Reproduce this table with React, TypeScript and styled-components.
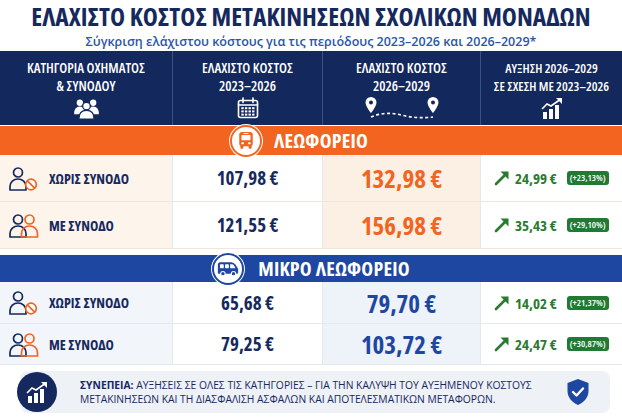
import React from 'react'
import styled, { createGlobalStyle } from 'styled-components'

const GlobalStyle = createGlobalStyle`
  body { margin: 0; background: #ffffff; }
  * { box-sizing: border-box; }
`

const NAVY = '#15295e'
const ORANGE = '#f2641f'
const BLUE = '#1e47a1'
const GREEN = '#2a7b30'
const COLS = '172px 150px 158px 142px'

type Tone = 'orange' | 'blue'

const palette = {
  orange: { bar: ORANGE, label: '#fdf4eb', mid: '#fcf0e4', line: '#eee6dd', value: ORANGE },
  blue: { bar: BLUE, label: '#f2f5fa', mid: '#eef2f9', line: '#e4e9f1', value: BLUE },
}

const Page = styled.div`
  width: 622px;
  height: 420px;
  overflow: hidden;
  background: #ffffff;
  font-family: "Open Sans", "Noto Sans", sans-serif;
  font-stretch: condensed;
`
const Heading = styled.header`
  height: 51px;
  display: flex;
  flex-direction: column;
  align-items: center;
  padding-top: 1px;
`
const Title = styled.h1`
  margin: 0;
  font-size: 25.5px;
  line-height: 30px;
  font-weight: 700;
  color: ${NAVY};
  white-space: nowrap;
`
const Subtitle = styled.div`
  margin-top: 3px;
  font-stretch: normal;
  font-size: 12.5px;
  line-height: 16px;
  font-weight: 600;
  color: #2a55a8;
  white-space: nowrap;
`
const HeaderRow = styled.div`
  display: grid;
  grid-template-columns: ${COLS};
  height: 74px;
  background: #13285c;
`
const HeadCell = styled.div<{ $small?: boolean }>`
  display: flex;
  flex-direction: column;
  align-items: center;
  padding-top: 8px;
  color: #ffffff;
  font-size: ${p => (p.$small ? 13 : 14)}px;
  line-height: 18px;
  font-weight: 600;
  text-align: center;
  white-space: nowrap;
  & + & {
    border-left: 1px solid #3c5087;
  }
`
const HeadIcon = styled.div`
  height: 24px;
  margin-top: 1px;
  display: flex;
  align-items: center;
`
const SectionBar = styled.div<{ $tone: Tone }>`
  height: ${p => (p.$tone === 'orange' ? 29 : 27)}px;
  margin-top: ${p => (p.$tone === 'orange' ? 1 : 6)}px;
  background: ${p => palette[p.$tone].bar};
  display: flex;
  justify-content: center;
  align-items: center;
  gap: ${p => (p.$tone === 'orange' ? 12 : 14)}px;
  padding-right: ${p => (p.$tone === 'orange' ? 24 : 0)}px;
`
const Badge = styled.div<{ $tone: Tone }>`
  position: relative;
  z-index: 1;
  width: 32px;
  height: 32px;
  flex-shrink: 0;
  border-radius: 50%;
  background: #ffffff;
  border: 2px solid ${p => palette[p.$tone].bar};
  box-shadow: 0 0 0 1px #ffffff;
  display: flex;
  align-items: center;
  justify-content: center;
`
const SectionTitle = styled.span`
  color: #ffffff;
  font-size: 20px;
  font-weight: 700;
  letter-spacing: 0.2px;
`
const DataRow = styled.div<{ $h: number; $tone: Tone }>`
  display: grid;
  grid-template-columns: ${COLS};
  height: ${p => p.$h}px;
  border-bottom: 1px solid ${p => palette[p.$tone].line};
`
const Cell = styled.div<{ $bg: string; $line: string }>`
  background: ${p => p.$bg};
  display: flex;
  align-items: center;
  justify-content: center;
  & + & {
    border-left: 1px solid ${p => p.$line};
  }
`
const LabelCell = styled(Cell)`
  justify-content: flex-start;
  padding-left: 8px;
  gap: 10px;
`
const Label = styled.span`
  font-size: 14px;
  font-weight: 700;
  color: ${NAVY};
`
const Amount = styled.span<{ $size: number; $color: string }>`
  font-size: ${p => p.$size}px;
  font-weight: 700;
  color: ${p => p.$color};
`
const ChangeCell = styled(Cell)`
  justify-content: flex-start;
  padding-left: 13px;
  gap: 5px;
`
const ChangeValue = styled.span`
  font-size: 15px;
  font-weight: 700;
  color: ${GREEN};
  margin-right: 5px;
`
const Pct = styled.span`
  background: #1f7a34;
  color: #ffffff;
  font-size: 9.5px;
  font-weight: 600;
  line-height: 14px;
  padding: 0 3px;
  border-radius: 3px;
`
const Footer = styled.div`
  margin: 6px 12px 0 20px;
  height: 42px;
  border-radius: 8px;
  background: #eef1f6;
  display: flex;
  align-items: center;
  padding-right: 20px;
`
const FooterBadge = styled.div`
  width: 40px;
  height: 40px;
  flex-shrink: 0;
  margin-left: -3px;
  border-radius: 50%;
  background: ${NAVY};
  display: flex;
  align-items: center;
  justify-content: center;
`
const FooterText = styled.p`
  flex: 1;
  margin: 0 0 0 23px;
  font-size: 10.3px;
  font-stretch: 90%;
  line-height: 14px;
  font-weight: 500;
  color: ${NAVY};
  white-space: nowrap;
  b {
    font-weight: 700;
  }
`

const Group = () => (
  <svg width="25" height="21" viewBox="0 0 26 22" fill="#fff">
    <circle cx="6" cy="5" r="3.3" />
    <circle cx="20" cy="5" r="3.3" />
    <path d="M0 17 q0-8 6-8 q3 0 4.5 2 L10 17z" />
    <path d="M26 17 q0-8 -6-8 q-3 0 -4.5 2 L16 17z" />
    <circle cx="13" cy="8.5" r="4" stroke="#13285c" strokeWidth="1.3" />
    <path d="M5 22 q0-9 8-9 q8 0 8 9z" stroke="#13285c" strokeWidth="1.3" />
  </svg>
)

const Calendar = () => (
  <svg width="22" height="22" viewBox="0 0 22 22">
    <g fill="none" stroke="#fff" strokeWidth="1.6" strokeLinecap="round">
      <rect x="1.5" y="3.5" width="19" height="17" rx="2" />
      <line x1="1.5" y1="8" x2="20.5" y2="8" />
      <line x1="6" y1="1" x2="6" y2="5.5" />
      <line x1="16" y1="1" x2="16" y2="5.5" />
    </g>
    <g fill="#fff">
      {[0, 1, 2].map(r =>
        [0, 1, 2, 3].map(c => <rect key={`${r}${c}`} x={4.3 + c * 3.6} y={10.2 + r * 3.2} width="2.4" height="2" />)
      )}
    </g>
  </svg>
)

const Pin = ({ x }: { x: number }) => (
  <g transform={`translate(${x} 0)`}>
    <path d="M0 1 a5.5 5.5 0 0 1 5.5 5.5 c0 4 -5.5 10.5 -5.5 10.5 s-5.5 -6.5 -5.5 -10.5 A5.5 5.5 0 0 1 0 1z" fill="#fff" />
    <circle cx="0" cy="6.5" r="2" fill="#13285c" />
  </g>
)

const Route = () => (
  <svg width="74" height="24" viewBox="0 0 74 24">
    <path d="M6 21 Q20 15 36 19 T68 21" fill="none" stroke="#fff" strokeWidth="1.6" strokeDasharray="3 2.5" />
    <Pin x={6} />
    <Pin x={68} />
  </svg>
)

const Chart = ({ size }: { size: number }) => (
  <svg width={size} height={size} viewBox="0 0 22 22">
    <g fill="#fff">
      <rect x="2" y="15" width="4" height="7" />
      <rect x="8" y="12" width="4" height="10" />
      <rect x="14" y="8" width="4" height="14" />
      <path d="M15 1 H21 V7z" />
    </g>
    <polyline points="1,12 6,7 10,9 18.5,3" fill="none" stroke="#fff" strokeWidth="1.6" />
  </svg>
)

const BusFront = () => (
  <svg width="18" height="19" viewBox="0 0 24 25">
    <rect x="3" y="1" width="18" height="19" rx="3.5" fill={ORANGE} />
    <rect x="6" y="5" width="12" height="7" rx="1" fill="#fff" />
    <rect x="8.5" y="2.4" width="7" height="1.3" rx="0.6" fill="#fff" />
    <circle cx="7.5" cy="16" r="1.6" fill="#fff" />
    <circle cx="16.5" cy="16" r="1.6" fill="#fff" />
    <rect x="4.5" y="19" width="4" height="4.5" rx="1.2" fill={ORANGE} />
    <rect x="15.5" y="19" width="4" height="4.5" rx="1.2" fill={ORANGE} />
  </svg>
)

const Van = () => (
  <svg width="22" height="16" viewBox="0 0 26 18">
    <path d="M1 4 Q1 1 4 1 H17 Q20 1 22 4 L25 9 V13 Q25 14.5 23.5 14.5 H2.5 Q1 14.5 1 13z" fill={BLUE} />
    <g fill="#fff">
      <rect x="3.5" y="3.5" width="4.5" height="4.5" rx="0.8" />
      <rect x="9.5" y="3.5" width="4.5" height="4.5" rx="0.8" />
      <path d="M15.5 3.5 H18 Q19.5 3.5 20.5 5.5 L21.8 8 H15.5z" />
    </g>
    <circle cx="7" cy="14.5" r="2.6" fill={BLUE} stroke="#fff" strokeWidth="1.2" />
    <circle cx="19.5" cy="14.5" r="2.6" fill={BLUE} stroke="#fff" strokeWidth="1.2" />
  </svg>
)

const Person = ({ x, color }: { x: number; color: string }) => (
  <g fill="none" stroke={color} strokeWidth="1.7" strokeLinejoin="round">
    <circle cx={x} cy="6.5" r="4.5" />
    <path d={`M${x - 8} 24 v-3.5 a8 7.5 0 0 1 16 0 v3.5z`} />
  </g>
)

const NoEscort = () => (
  <svg width="31" height="25" viewBox="0 0 31 25">
    <Person x={10} color={NAVY} />
    <circle cx="23" cy="18.5" r="5.3" fill="#fff" stroke={ORANGE} strokeWidth="1.7" />
    <line x1="19.3" y1="14.8" x2="26.7" y2="22.2" stroke={ORANGE} strokeWidth="1.7" />
  </svg>
)

const WithEscort = () => (
  <svg width="31" height="25" viewBox="0 0 31 25">
    <Person x={10} color={NAVY} />
    <Person x={21.5} color={ORANGE} />
  </svg>
)

const UpArrow = () => (
  <svg width="16" height="16" viewBox="0 0 16 16">
    <line x1="2" y1="14" x2="12" y2="4" stroke={GREEN} strokeWidth="2.6" strokeLinecap="round" />
    <path d="M6.5 1.5 H14.5 V9.5z" fill={GREEN} />
  </svg>
)

const Shield = () => (
  <svg width="24" height="28" viewBox="0 0 24 28">
    <path d="M12 1 L22.5 5 V13 C22.5 20 17.5 24.5 12 27 C6.5 24.5 1.5 20 1.5 13 V5z" fill={BLUE} />
    <polyline points="7,14 10.5,17.5 17,10.5" fill="none" stroke="#fff" strokeWidth="2.4" strokeLinecap="round" strokeLinejoin="round" />
  </svg>
)

type Line = { label: string; escort: boolean; before: string; after: string; diff: string; pct: string }

const sections: { tone: Tone; name: string; height: number; icon: React.ReactNode; lines: Line[] }[] = [
  {
    tone: 'orange',
    name: 'ΛΕΩΦΟΡΕΙΟ',
    height: 47,
    icon: <BusFront />,
    lines: [
      { label: 'ΧΩΡΙΣ ΣΥΝΟΔΟ', escort: false, before: '107,98 €', after: '132,98 €', diff: '24,99 €', pct: '(+23,13%)' },
      { label: 'ΜΕ ΣΥΝΟΔΟ', escort: true, before: '121,55 €', after: '156,98 €', diff: '35,43 €', pct: '(+29,10%)' },
    ],
  },
  {
    tone: 'blue',
    name: 'ΜΙΚΡΟ ΛΕΩΦΟΡΕΙΟ',
    height: 42,
    icon: <Van />,
    lines: [
      { label: 'ΧΩΡΙΣ ΣΥΝΟΔΟ', escort: false, before: '65,68 €', after: '79,70 €', diff: '14,02 €', pct: '(+21,37%)' },
      { label: 'ΜΕ ΣΥΝΟΔΟ', escort: true, before: '79,25 €', after: '103,72 €', diff: '24,47 €', pct: '(+30,87%)' },
    ],
  },
]

export default function App() {
  return (
    <Page>
      <GlobalStyle />
      <Heading>
        <Title>ΕΛΑΧΙΣΤΟ ΚΟΣΤΟΣ ΜΕΤΑΚΙΝΗΣΕΩΝ ΣΧΟΛΙΚΩΝ ΜΟΝΑΔΩΝ</Title>
        <Subtitle>Σύγκριση ελάχιστου κόστους για τις περιόδους 2023–2026 και 2026–2029*</Subtitle>
      </Heading>
      <HeaderRow>
        <HeadCell>
          ΚΑΤΗΓΟΡΙΑ ΟΧΗΜΑΤΟΣ<br />& ΣΥΝΟΔΟΥ
          <HeadIcon><Group /></HeadIcon>
        </HeadCell>
        <HeadCell>
          ΕΛΑΧΙΣΤΟ ΚΟΣΤΟΣ<br />2023–2026
          <HeadIcon><Calendar /></HeadIcon>
        </HeadCell>
        <HeadCell>
          ΕΛΑΧΙΣΤΟ ΚΟΣΤΟΣ<br />2026–2029
          <HeadIcon><Route /></HeadIcon>
        </HeadCell>
        <HeadCell $small>
          ΑΥΞΗΣΗ 2026–2029<br />ΣΕ ΣΧΕΣΗ ΜΕ 2023–2026
          <HeadIcon><Chart size={22} /></HeadIcon>
        </HeadCell>
      </HeaderRow>
      {sections.map(s => {
        const c = palette[s.tone]
        return (
          <React.Fragment key={s.name}>
            <SectionBar $tone={s.tone}>
              <Badge $tone={s.tone}>{s.icon}</Badge>
              <SectionTitle>{s.name}</SectionTitle>
            </SectionBar>
            {s.lines.map((l, i) => (
              <DataRow key={l.label} $h={i === 1 && s.tone === 'blue' ? 41 : s.height} $tone={s.tone}>
                <LabelCell $bg={c.label} $line={c.line}>
                  {l.escort ? <WithEscort /> : <NoEscort />}
                  <Label>{l.label}</Label>
                </LabelCell>
                <Cell $bg="#ffffff" $line={c.line}>
                  <Amount $size={19} $color={NAVY}>{l.before}</Amount>
                </Cell>
                <Cell $bg={c.mid} $line={c.line}>
                  <Amount $size={25} $color={c.value}>{l.after}</Amount>
                </Cell>
                <ChangeCell $bg="#ffffff" $line={c.line}>
                  <UpArrow />
                  <ChangeValue>{l.diff}</ChangeValue>
                  <Pct>{l.pct}</Pct>
                </ChangeCell>
              </DataRow>
            ))}
          </React.Fragment>
        )
      })}
      <Footer>
        <FooterBadge><Chart size={22} /></FooterBadge>
        <FooterText>
          <b>ΣΥΝΕΠΕΙΑ:</b> ΑΥΞΗΣΕΙΣ ΣΕ ΟΛΕΣ ΤΙΣ ΚΑΤΗΓΟΡΙΕΣ – ΓΙΑ ΤΗΝ ΚΑΛΥΨΗ ΤΟΥ ΑΥΞΗΜΕΝΟΥ ΚΟΣΤΟΥΣ<br />
          ΜΕΤΑΚΙΝΗΣΕΩΝ ΚΑΙ ΤΗ ΔΙΑΣΦΑΛΙΣΗ ΑΣΦΑΛΩΝ ΚΑΙ ΑΠΟΤΕΛΕΣΜΑΤΙΚΩΝ ΜΕΤΑΦΟΡΩΝ.
        </FooterText>
        <Shield />
      </Footer>
    </Page>
  )
}
